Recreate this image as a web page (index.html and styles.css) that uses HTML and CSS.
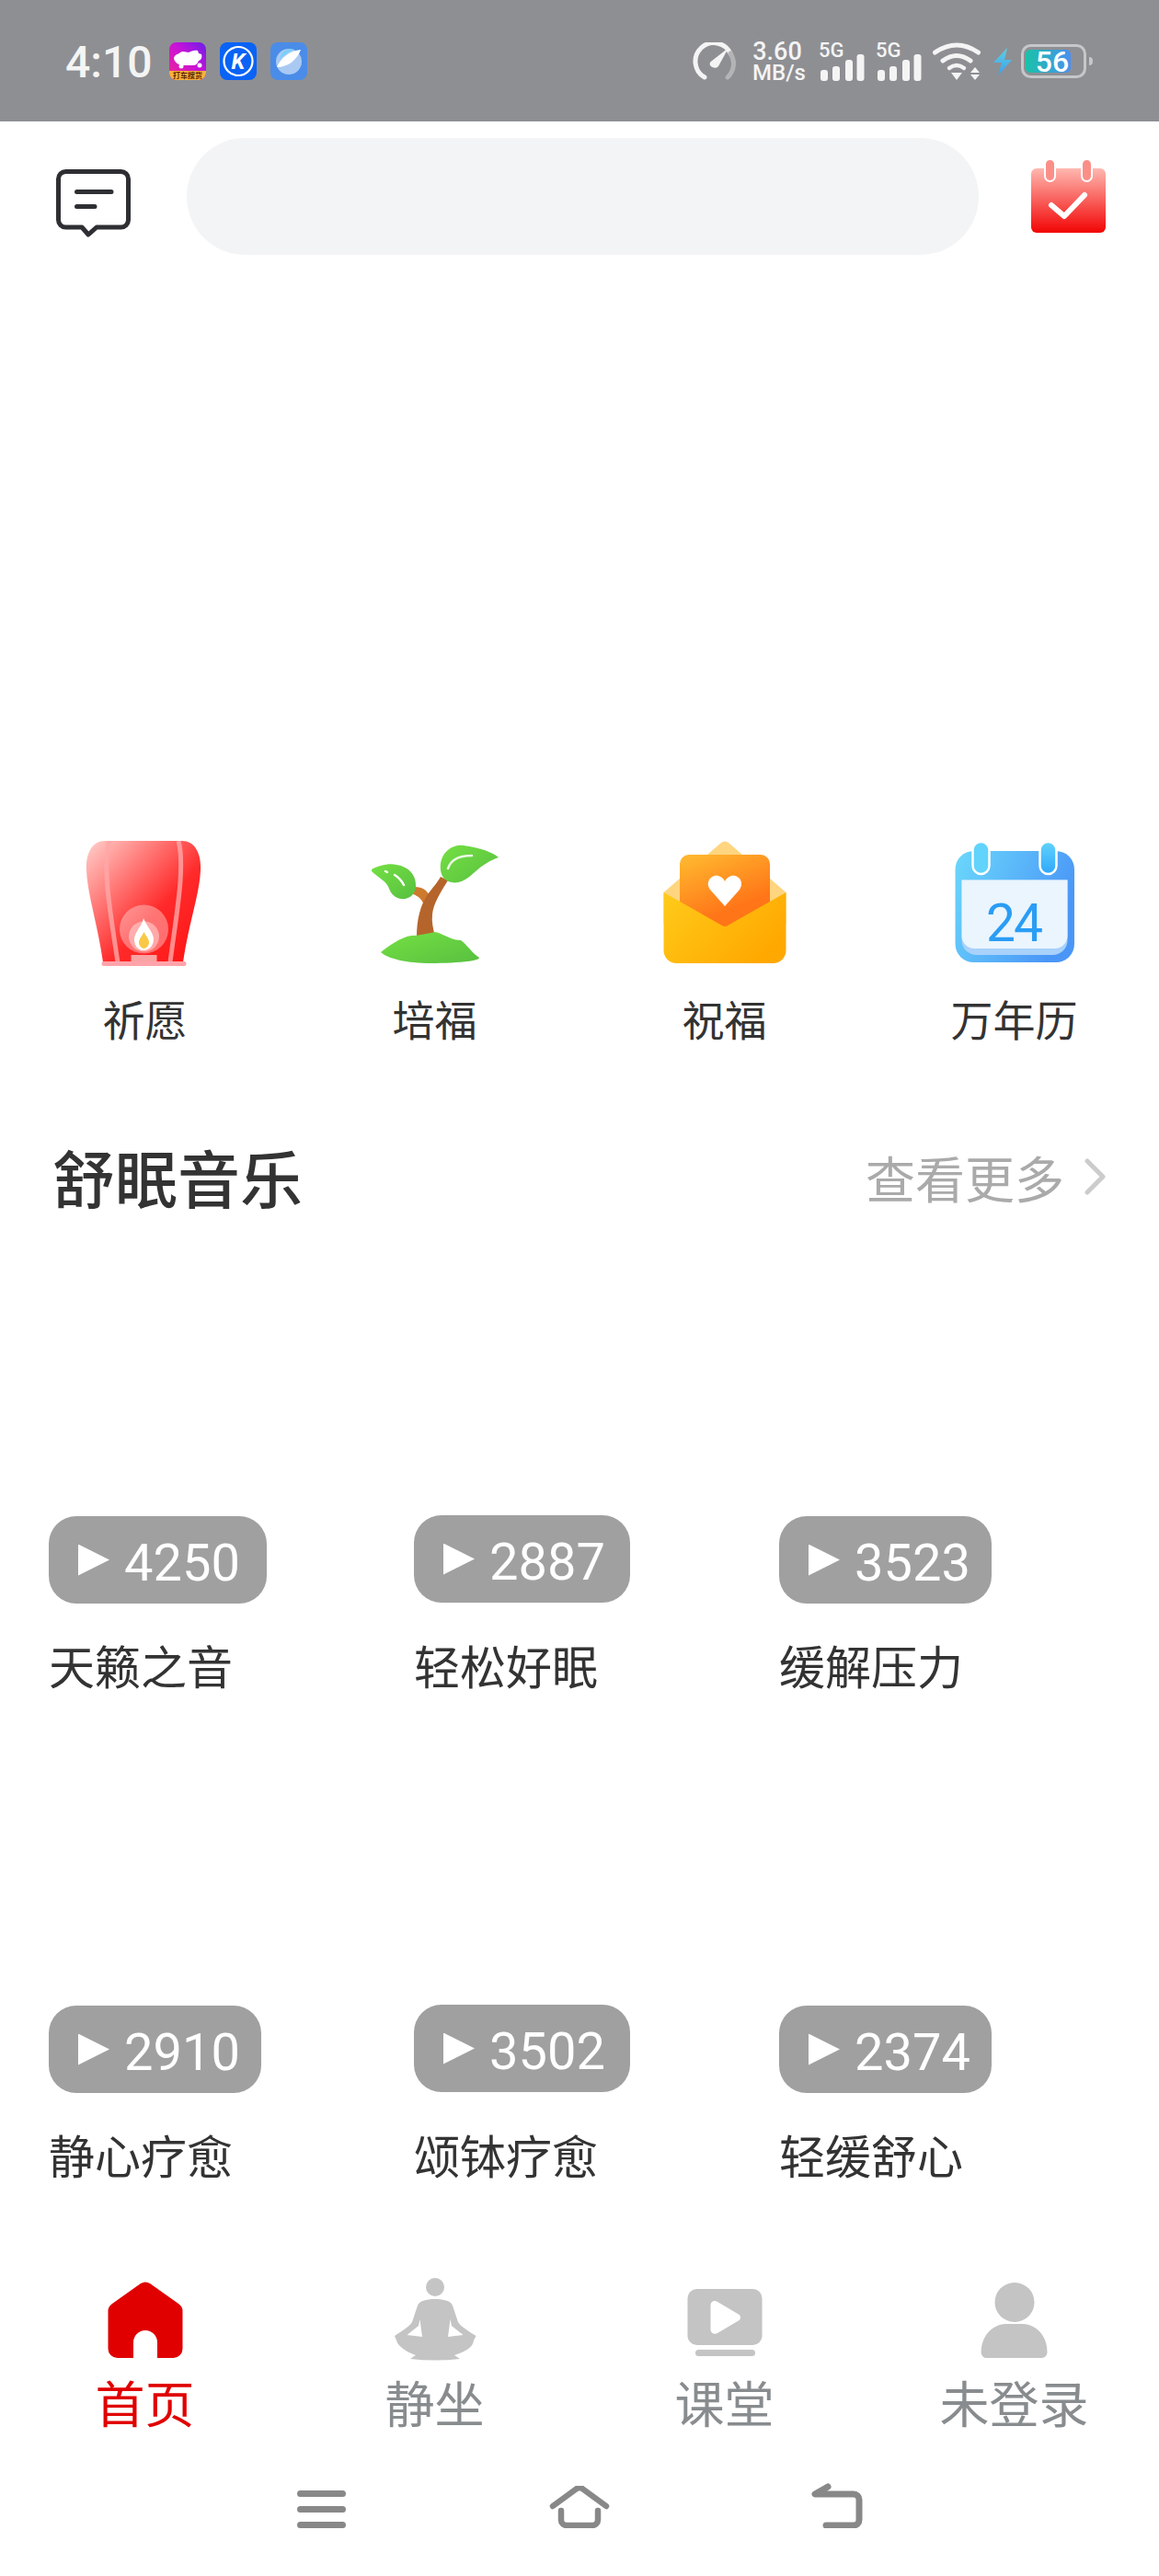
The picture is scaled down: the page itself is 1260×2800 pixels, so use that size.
FILE: index.html
```html
<!DOCTYPE html>
<html lang="zh-CN">
<head>
	<meta charset="UTF-8">
	<title>首页</title>
	<link rel="stylesheet" href="styles.css">
</head>
<body>
	<div class="status-bar">
		<span class="clock">4:10</span>
		<svg class="app-icon first" viewBox="0 0 40 41">
			<defs>
				<linearGradient id="appA" x1="1" y1="0" x2="0" y2="1"><stop offset="0" stop-color="#6a1fe8"/><stop offset="0.45" stop-color="#c812d8"/><stop offset="1" stop-color="#f02a90"/></linearGradient>
			</defs>
			<rect width="40" height="41" rx="8" fill="url(#appA)"/>
			<path d="M5 17c1-4 5-4 7-6 3-2 6 0 9 0 3-1 6-3 10-2l1 3 3 1c1 3 0 6-3 7-1 3-3 5-6 5H14c-4 0-9-4-9-8z" fill="#fff"/>
			<circle cx="13" cy="26" r="2.5" fill="#fff"/><circle cx="33" cy="25" r="2.5" fill="#fff"/>
			<path d="M0 31h40v2a8 8 0 0 1-8 8H8a8 8 0 0 1-8-8z" fill="#fbb03b"/>
			<text x="20" y="39" class="app-tiny">打车搜货</text>
		</svg>
		<svg class="app-icon" viewBox="0 0 40 41">
			<rect width="40" height="41" rx="8" fill="#0a63f5"/>
			<circle cx="20" cy="20.5" r="15.5" fill="none" stroke="#fff" stroke-width="2.2"/>
			<text x="20" y="29" class="app-k">K</text>
		</svg>
		<svg class="app-icon" viewBox="0 0 40 41">
			<rect width="40" height="41" rx="8" fill="#4a8ce8"/>
			<circle cx="20" cy="21" r="14" fill="#a9c9f3"/>
			<path d="M7 27C11 17 21 9 33 8c-4 11-14 19-26 19z" fill="#fff"/>
			<path d="M10 19a13 13 0 0 1 16-11c-7 2-12 6-16 11z" fill="#6fd3fb"/>
		</svg>
		<svg class="speed-icon" viewBox="0 0 47 41">
			<path d="M13 38A20 20 0 1 1 41 12" fill="none" stroke="#f4f4f4" stroke-width="5" stroke-linecap="round"/>
			<path d="M41 12a20 20 0 0 1-3 26" fill="none" stroke="#b3b4b6" stroke-width="5" stroke-linecap="round"/>
			<path d="M39 6L28 26c-2 3-7 2-9-1-1-2 0-4 2-5z" fill="#f4f4f4"/>
		</svg>
		<div class="net-speed">3.60<br>MB/s</div>
		<svg class="signal first-signal" viewBox="0 -8 50 50">
			<text x="0" y="16" class="signal-text">5G</text>
			<rect x="2" y="30" width="8" height="12" rx="3" fill="#f4f4f4"/>
			<rect x="15" y="26" width="8" height="16" rx="3" fill="#f4f4f4"/>
			<rect x="29" y="19" width="8" height="23" rx="3" fill="#f4f4f4"/>
			<rect x="41.5" y="13" width="8" height="29" rx="3" fill="#f4f4f4"/>
		</svg>
		<svg class="signal second-signal" viewBox="0 -8 50 50">
			<text x="0" y="16" class="signal-text">5G</text>
			<rect x="2" y="30" width="8" height="12" rx="3" fill="#f4f4f4"/>
			<rect x="15" y="26" width="8" height="16" rx="3" fill="#f4f4f4"/>
			<rect x="29" y="19" width="8" height="23" rx="3" fill="#f4f4f4"/>
			<rect x="41.5" y="13" width="8" height="29" rx="3" fill="#f4f4f4"/>
		</svg>
		<svg class="wifi" viewBox="0 0 52 42">
			<path d="M2.500 11Q26-5 49.500 11" fill="none" stroke="#f4f4f4" stroke-width="5" stroke-linecap="round"/>
			<path d="M11 20Q26 9 41 20" fill="none" stroke="#f4f4f4" stroke-width="5" stroke-linecap="round"/>
			<path d="M18 28Q26 22 34 28" fill="none" stroke="#f4f4f4" stroke-width="4.500" stroke-linecap="round"/>
			<path d="M20 33H32L26 41z" fill="#f4f4f4"/>
			<path d="M41 33L46 27 51 33zM41 35H51L46 41z" fill="#f4f4f4"/>
		</svg>
		<svg class="bolt" viewBox="0 0 20 30">
			<defs>
				<linearGradient id="boltFill" x1="0" y1="0" x2="0" y2="1"><stop offset="0" stop-color="#5ed0e0"/><stop offset="1" stop-color="#3c9ff0"/></linearGradient>
			</defs>
			<path d="M15 0L0 16H9L5 30 20 13H12z" fill="url(#boltFill)"/>
		</svg>
		<svg class="battery" viewBox="0 0 78 37">
			<defs>
				<linearGradient id="battFill" x1="0" y1="0" x2="1" y2="0"><stop offset="0" stop-color="#19c2a8"/><stop offset="1" stop-color="#4a8ff0"/></linearGradient>
			</defs>
			<rect x="1.500" y="1.500" width="68" height="34" rx="9" fill="none" stroke="#c6c7c9" stroke-width="3"/>
			<rect x="5" y="6" width="49" height="25" rx="5" fill="url(#battFill)"/>
			<path d="M74 14a4 4 0 0 1 4 4v1a4 4 0 0 1-4 4z" fill="#c6c7c9"/>
			<text x="34" y="30" class="batt-text">56</text>
		</svg>
	</div>

	<div class="top-bar">
		<svg class="msg-icon" viewBox="0 0 83 74">
			<path d="M10.500 2.500H70.500a8 8 0 0 1 8 8V55a8 8 0 0 1-8 8H44L35 71 28 63H10.500a8 8 0 0 1-8-8V10.500a8 8 0 0 1 8-8z" fill="none" stroke="#2d2f33" stroke-width="5" stroke-linejoin="round"/>
			<path d="M22.500 24.500H60M22.500 40.500H42" stroke="#2d2f33" stroke-width="5" stroke-linecap="round"/>
		</svg>
		<div class="search-pill"></div>
		<svg class="sign-icon" viewBox="0 0 81 81">
			<defs>
				<linearGradient id="signFill" x1="0" y1="0" x2="0" y2="1"><stop offset="0" stop-color="#ffb8b0"/><stop offset="1" stop-color="#f20505"/></linearGradient>
			</defs>
			<rect y="10" width="81" height="70" rx="6" fill="url(#signFill)"/>
			<rect x="15" y="0" width="11" height="24" rx="5.500" fill="#fb8f88" stroke="#fff" stroke-width="2"/>
			<rect x="55" y="0" width="11" height="24" rx="5.500" fill="#fb8f88" stroke="#fff" stroke-width="2"/>
			<path d="M22 50L36 62 58 39" fill="none" stroke="#fff" stroke-width="6" stroke-linecap="round" stroke-linejoin="round"/>
		</svg>
	</div>

	<div class="banner"></div>

	<ul class="shortcuts">
		<li>
			<svg class="shortcut-icon" viewBox="0 0 140 136">
				<defs>
					<linearGradient id="lanternFill" x1="0" y1="0" x2="1" y2="1"><stop offset="0" stop-color="#ffd0cc"/><stop offset="0.6" stop-color="#ff2a2a"/><stop offset="1" stop-color="#ff1212"/></linearGradient>
				</defs>
				<path d="M26 0H110C124 0 131 14 130 32 129 58 117 90 111 132H24C18 90 7 58 6 32 5 14 12 0 26 0z" fill="url(#lanternFill)"/>
				<path d="M31 0C22 28 34 90 40 132M106 0C114 30 102 90 97 132" fill="none" stroke="#ffa8a8" stroke-opacity="0.8" stroke-width="5"/>
				<circle cx="68.500" cy="96" r="26.500" fill="#fff" fill-opacity="0.35"/>
				<circle cx="68.500" cy="104" r="16.500" fill="#fff" fill-opacity="0.4"/>
				<path d="M68 84C72 94 79 100 79 107 79 114 74 119 68 119 62 119 58 114 58 107 58 99 66 94 68 84z" fill="#fff"/>
				<path d="M68.500 99C71 104 74 107 74 110 74 114 71 117 68.500 117 66 117 63 114 63 110 63 107 66 104 68.500 99z" fill="#f9c846"/>
				<rect x="54.500" y="124" width="28" height="7" fill="#f9a3a3"/>
				<rect x="22.500" y="131" width="92" height="5" rx="2.500" fill="#ffa3aa"/>
			</svg>
			<span>祈愿</span>
		</li>
		<li>
			<svg class="shortcut-icon" viewBox="0 0 140 136">
				<defs>
					<linearGradient id="leafFill" x1="0" y1="0" x2="1" y2="1"><stop offset="0" stop-color="#74e043"/><stop offset="1" stop-color="#58c040"/></linearGradient>
				</defs>
				<path d="M48 50C56 50 62 54 64 60L58 70C56 64 52 60 46 58z" fill="#cd7a2e"/>
				<path d="M50 104C50 85 54 70 62 58 68 50 72 46 76 39L84 43C76 56 68 68 67 80 66 88 68 96 70 104z" fill="#b5652b"/>
				<path d="M76 32C74 14 88 3 101 5 115 7 130 11 139 18 130 21 122 26 113 34 105 42 96 47 88 45 81 44 77 39 76 32z" fill="url(#leafFill)"/>
				<path d="M1 31C8 27 20 24 28 26 42 28 50 38 49 50 48 60 40 64 33 63 26 62 22 57 20 52 18 44 8 40 1 33z" fill="url(#leafFill)"/>
				<path d="M11 121C20 114 32 105 44 103 52 103 60 101 70 99 78 100 86 108 98 108 104 112 110 122 118 127 118 131 90 133 65 133 40 133 18 128 11 121z" fill="url(#leafFill)"/>
				<path d="M84 30C87 21 96 16 110 16" fill="none" stroke="#fff" stroke-opacity="0.85" stroke-width="2.500" stroke-linecap="round"/>
				<path d="M26 37C31 40 34 44 36 48M16 33L18 34" fill="none" stroke="#fff" stroke-width="2.500" stroke-linecap="round"/>
			</svg>
			<span>培福</span>
		</li>
		<li>
			<svg class="shortcut-icon" viewBox="0 0 140 136">
				<defs>
					<linearGradient id="mailFront" x1="0" y1="0" x2="1" y2="0.6"><stop offset="0" stop-color="#ffcb1a"/><stop offset="1" stop-color="#ffa800"/></linearGradient>
					<linearGradient id="mailCard" x1="0.2" y1="0" x2="0.7" y2="1"><stop offset="0" stop-color="#ffb52e"/><stop offset="0.75" stop-color="#ff7518"/></linearGradient>
				</defs>
				<path d="M3.500 56L66 2Q70-1 74 2L136.500 56V90H3.500z" fill="#ffd580"/>
				<path d="M31 15H109A10 10 0 0 1 119 25V95H21V25A10 10 0 0 1 31 15z" fill="url(#mailCard)"/>
				<path d="M70 71L54 53C48 44 56 36 63 38 66 39 69 41 70 44 71 41 74 39 77 38 84 36 92 44 86 53z" fill="#fff"/>
				<path d="M3.500 56L67 92Q70 94 73 92L136.500 56V119A14 14 0 0 1 122.500 133H17.500A14 14 0 0 1 3.500 119z" fill="url(#mailFront)"/>
			</svg>
			<span>祝福</span>
		</li>
		<li>
			<svg class="shortcut-icon" viewBox="0 0 140 136">
				<defs>
					<linearGradient id="calBody" x1="0" y1="0" x2="1" y2="0.4"><stop offset="0" stop-color="#6bd8fb"/><stop offset="1" stop-color="#4a96f7"/></linearGradient>
					<linearGradient id="calRing" x1="0" y1="0" x2="0" y2="1"><stop offset="0" stop-color="#62d3fb"/><stop offset="1" stop-color="#2ea7fb"/></linearGradient>
				</defs>
				<rect x="5.500" y="11" width="129.500" height="121" rx="20" fill="url(#calBody)"/>
				<path d="M12.500 42.500H127.500V108A16 16 0 0 1 111.500 124H28.500A16 16 0 0 1 12.500 108z" fill="#a8d1fb"/>
				<path d="M12.500 42.500H127.500V103A14 14 0 0 1 113.500 117H26.500A14 14 0 0 1 12.500 103z" fill="#eaf5fe"/>
				<rect x="24.500" y="1" width="18" height="35" rx="9" fill="#62d3fb" stroke="#fff" stroke-width="2.500"/>
				<rect x="97.500" y="1" width="18" height="35" rx="9" fill="url(#calRing)" stroke="#fff" stroke-width="2.500"/>
				<text x="69" y="109" class="cal-day">24</text>
			</svg>
			<span>万年历</span>
		</li>
	</ul>

	<div class="section-head">
		<h2>舒眠音乐</h2>
		<div class="more">
			<span>查看更多</span>
			<svg class="more-arrow" viewBox="0 0 25 40">
				<path d="M4 3L21 20 4 37" fill="none" stroke="#cccccc" stroke-width="5" stroke-linecap="round" stroke-linejoin="round"/>
			</svg>
		</div>
	</div>

	<div class="music-grid">
		<div class="music-card">
			<div class="cover"><div class="play-count"><i class="tri"></i><span>4250</span></div></div>
			<p>天籁之音</p>
		</div>
		<div class="music-card">
			<div class="cover"><div class="play-count mid"><i class="tri"></i><span>2887</span></div></div>
			<p>轻松好眠</p>
		</div>
		<div class="music-card">
			<div class="cover"><div class="play-count small"><i class="tri"></i><span>3523</span></div></div>
			<p>缓解压力</p>
		</div>
		<div class="music-card">
			<div class="cover"><div class="play-count tiny"><i class="tri"></i><span>2910</span></div></div>
			<p>静心疗愈</p>
		</div>
		<div class="music-card">
			<div class="cover"><div class="play-count mid"><i class="tri"></i><span>3502</span></div></div>
			<p>颂钵疗愈</p>
		</div>
		<div class="music-card">
			<div class="cover"><div class="play-count small"><i class="tri"></i><span>2374</span></div></div>
			<p>轻缓舒心</p>
		</div>
	</div>

	<ul class="tab-bar">
		<li class="on">
			<svg class="tab-icon" viewBox="0 0 110 90">
				<path d="M50 6Q55 3 60 6L91 28Q95.500 31 95.500 36V77A10 10 0 0 1 85.500 87H68V70A13 13 0 0 0 42 70V87H24.500A10 10 0 0 1 14.500 77V36Q14.500 31 19 28z" fill="#e00000"/>
			</svg>
			<span>首页</span>
		</li>
		<li>
			<svg class="tab-icon" viewBox="0 0 110 90">
				<circle cx="55" cy="10" r="10" fill="#c4c4c4"/>
				<path d="M55 23C45 23 38 25 36 30L30 48C28 52 20 57 11 63L13 68C15 76 28 82 34 84L28 88Q55 91 82 88L76 84C88 80 96 76 97 68L99.500 63C90 57 82 52 80 48L74 30C72 25 65 23 55 23z" fill="#c4c4c4"/>
				<path d="M24.500 62L37 52 38.500 45 41 64zM85.500 62L73 52 71.500 45 69 64z" fill="#fff"/>
			</svg>
			<span>静坐</span>
		</li>
		<li>
			<svg class="tab-icon" viewBox="0 0 110 90">
				<rect x="14.500" y="12" width="81" height="61" rx="10" fill="#c4c4c4"/>
				<rect x="23" y="78" width="65" height="7" rx="3.500" fill="#c4c4c4"/>
				<path d="M39.500 30C39.500 25 44 24 47 26L69 39C73 41 73 45 69 47L47 60C44 62 39.500 60 39.500 56z" fill="#fff"/>
			</svg>
			<span>课堂</span>
		</li>
		<li>
			<svg class="tab-icon" viewBox="0 0 110 90">
				<circle cx="55" cy="26.500" r="21.500" fill="#c4c4c4"/>
				<path d="M25 87A6 6 0 0 1 18.600 81C18.600 62 32 50 46 50H63C78 50 90.500 62 90.500 81A6 6 0 0 1 84.500 87z" fill="#c4c4c4"/>
			</svg>
			<span>未登录</span>
		</li>
	</ul>

	<div class="nav-bar">
		<svg class="nav-menu" viewBox="0 0 53 41">
			<path d="M3.500 3.500H49.500M3.500 20.500H49.500M3.500 37.500H49.500" stroke="#888" stroke-width="7" stroke-linecap="round"/>
		</svg>
		<svg class="nav-home" viewBox="0 0 66 46">
			<path d="M4 22L30 3Q33 1 36 3L62 22" fill="none" stroke="#888" stroke-width="6.500" stroke-linecap="round" stroke-linejoin="round"/>
			<path d="M13 27V37A6 6 0 0 0 19 43H47A6 6 0 0 0 53 37V27" fill="none" stroke="#888" stroke-width="6.500" stroke-linecap="round"/>
		</svg>
		<svg class="nav-back" viewBox="0 0 56 49">
			<path d="M18 4L4 12H46A6 6 0 0 1 52 18V40A6 6 0 0 1 46 46H16" fill="none" stroke="#888" stroke-width="7" stroke-linecap="round" stroke-linejoin="round"/>
		</svg>
	</div>
</body>
</html>
```

FILE: styles.css
```css
*{
	padding: 0;
	margin: 0;
	list-style: none;
	box-sizing: border-box;
}
body{
	width: 1260px;
	height: 2800px;
	overflow: hidden;
	background-color: #fff;
	color: #333;
	font-family: "Noto Sans CJK SC", "Noto Sans", sans-serif;
}
svg{
	display: block;
	flex: none;
}

.status-bar{
	height: 132px;
	background-color: #8e8f93;
	display: flex;
	align-items: flex-start;
	padding: 46px 0 0 71px;
	color: #f4f4f4;
}
.clock{
	width: 92px;
	font: 500 48px/44px Roboto, sans-serif;
	margin-right: 21px;
}
.app-icon{
	width: 40px;
	height: 41px;
	margin-left: 15px;
}
.app-icon.first{
	margin-left: 0;
}
.app-tiny{
	font: 700 8px "Noto Sans CJK SC", sans-serif;
	fill: #5a2a00;
	text-anchor: middle;
}
.app-k{
	font: italic 700 24px Roboto, sans-serif;
	fill: #fff;
	text-anchor: middle;
}
.speed-icon{
	width: 47px;
	height: 41px;
	margin-left: 419px;
}
.net-speed{
	width: 54px;
	margin: -1px 0 0 18px;
	text-align: center;
	white-space: nowrap;
	font: 500 24px/23px Roboto, sans-serif;
}
.net-speed::first-line{
	font-size: 27px;
}
.signal{
	width: 50px;
	height: 50px;
	margin-top: -8px;
}
.first-signal{
	margin-left: 18px;
}
.second-signal{
	margin-left: 12px;
}
.signal-text{
	font: 500 22px Roboto, sans-serif;
	fill: #f4f4f4;
}
.wifi{
	width: 52px;
	height: 42px;
	margin-left: 12px;
}
.bolt{
	width: 20px;
	height: 30px;
	margin: 6px 0 0 14px;
}
.battery{
	width: 78px;
	height: 37px;
	margin: 2px 0 0 10px;
}
.batt-text{
	font: 500 32px Roboto, sans-serif;
	fill: #fff;
	text-anchor: middle;
}

.top-bar{
	height: 163px;
	display: flex;
	align-items: center;
	padding: 18px 0 18px 61px;
}
.msg-icon{
	width: 83px;
	height: 74px;
	margin-top: 15px;
}
.search-pill{
	width: 861px;
	height: 127px;
	margin-left: 59px;
	background-color: #f3f4f6;
	border-radius: 64px;
}
.sign-icon{
	width: 81px;
	height: 81px;
	margin-left: 57px;
}

.banner{
	height: 619px;
}

.shortcuts{
	display: grid;
	grid-template-columns: repeat(4, 315px);
}
.shortcuts li{
	display: flex;
	flex-direction: column;
	align-items: center;
}
.shortcut-icon{
	width: 140px;
	height: 136px;
}
.shortcuts span{
	margin-top: 26px;
	font-size: 46px;
	line-height: 60px;
}
.cal-day{
	font: 400 57px Roboto, sans-serif;
	letter-spacing: -2px;
	fill: #2a9df4;
	text-anchor: middle;
}

.section-head{
	height: 80px;
	margin-top: 103px;
	margin-bottom: 2px;
	padding: 0 57px;
	display: flex;
	justify-content: space-between;
	align-items: center;
}
.section-head h2{
	font-size: 68px;
	font-weight: 500;
	line-height: 80px;
}
.more{
	display: flex;
	align-items: center;
	color: #aaaaaa;
	font-size: 54px;
}
.more-arrow{
	width: 25px;
	height: 40px;
	margin-left: 21px;
}

.music-grid{
	display: grid;
	grid-template-columns: repeat(3, 397px);
	row-gap: 9px;
	padding-left: 53px;
}
.cover{
	height: 422px;
	display: flex;
	align-items: flex-end;
}
.play-count{
	width: 237px;
	height: 95px;
	display: flex;
	align-items: center;
	padding-left: 32px;
	background-color: #a0a0a0;
	border-radius: 30px;
	color: #fff;
	font: 400 56px Roboto, sans-serif;
}
.play-count span{
	padding-top: 6px;
}
.play-count.mid{
	width: 235px;
	margin-bottom: 1px;
}
.play-count.small{
	width: 231px;
}
.play-count.tiny{
	width: 231px;
}
.tri{
	width: 34px;
	height: 34px;
	margin-right: 16px;
	background-color: #fff;
	clip-path: polygon(0 0, 100% 50%, 0 100%);
}
.music-card p{
	margin-top: 31px;
	font-size: 50px;
	line-height: 70px;
}

.tab-bar{
	display: grid;
	grid-template-columns: repeat(4, 315px);
	margin-top: 100px;
}
.tab-bar li{
	display: flex;
	flex-direction: column;
	align-items: center;
	color: #888c8e;
}
.tab-bar li.on{
	color: #e00000;
}
.tab-icon{
	width: 110px;
	height: 90px;
}
.tab-bar span{
	margin-top: 15px;
	font-size: 54px;
	line-height: 60px;
}

.nav-bar{
	height: 49px;
	margin-top: 58px;
	display: flex;
	align-items: flex-end;
	padding-left: 323px;
}
.nav-menu{
	width: 53px;
	height: 41px;
}
.nav-home{
	width: 66px;
	height: 46px;
	margin-left: 221px;
}
.nav-back{
	width: 56px;
	height: 49px;
	margin-left: 219px;
}
```
